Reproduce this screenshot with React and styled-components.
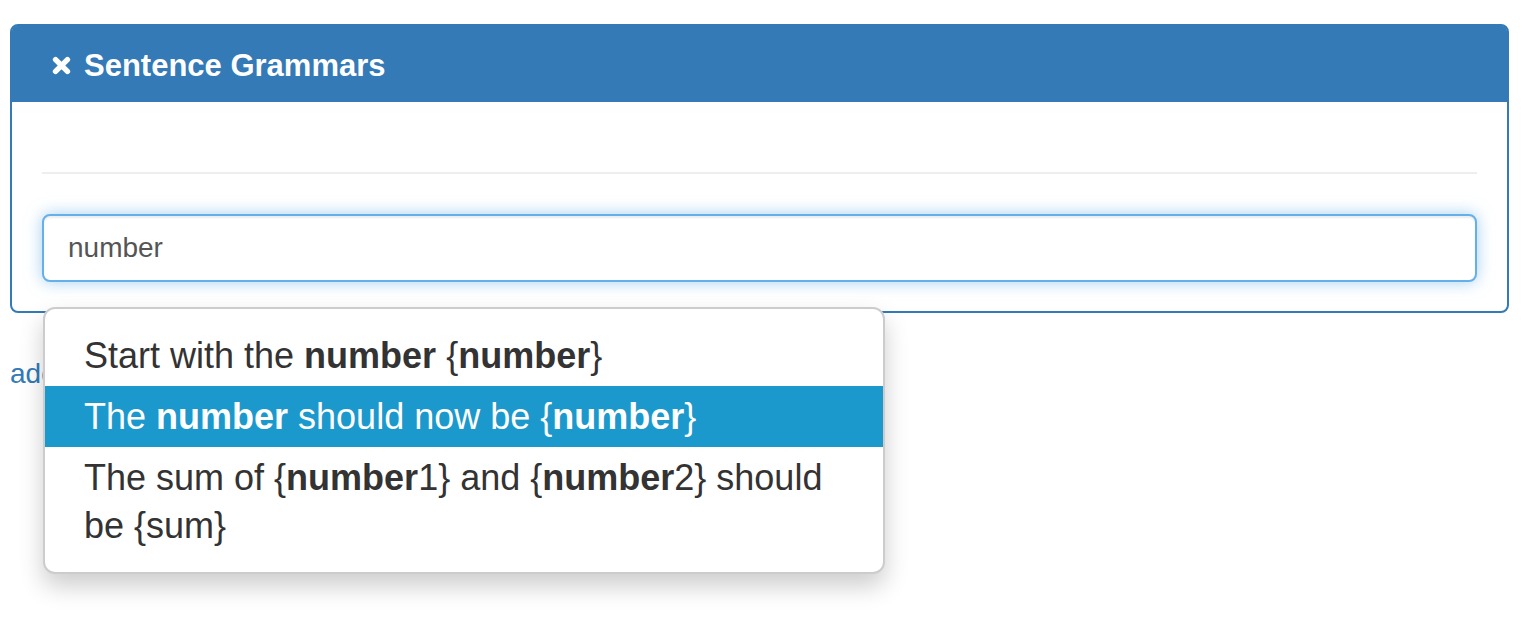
import React, { useState } from "react";
import styled, { createGlobalStyle } from "styled-components";

const GlobalStyle = createGlobalStyle`
  body {
    margin: 0;
    background: #fff;
    font-family: "Liberation Sans", Arial, sans-serif;
    color: #333;
  }
`;

const suggestions = [
  [["Start with the "], ["number", true], [" {"], ["number", true], ["}"]],
  [["The "], ["number", true], [" should now be {"], ["number", true], ["}"]],
  [
    ["The sum of {"],
    ["number", true],
    ["1} and {"],
    ["number", true],
    ["2} should be {sum}"],
  ],
];

export default function App() {
  const [query, setQuery] = useState("number");
  const [active, setActive] = useState(1);

  return (
    <Page>
      <GlobalStyle />
      <Panel>
        <Heading>
          <CloseIcon viewBox="0 0 16 16">
            <path
              d="M3 3 L13 13 M13 3 L3 13"
              stroke="#fff"
              strokeWidth="4.6"
              strokeLinecap="round"
            />
          </CloseIcon>
          Sentence Grammars
        </Heading>
        <Body>
          <Rule />
          <Field>
            <Input value={query} onChange={(e) => setQuery(e.target.value)} />
            <Dropdown>
              {suggestions.map((parts, i) => (
                <Item
                  key={i}
                  $active={i === active}
                  onMouseEnter={() => setActive(i)}
                >
                  {parts.map(([text, bold], j) =>
                    bold ? <b key={j}>{text}</b> : <span key={j}>{text}</span>
                  )}
                </Item>
              ))}
            </Dropdown>
          </Field>
        </Body>
      </Panel>
      <AddLink href="#">add sentence grammar</AddLink>
    </Page>
  );
}

const Page = styled.div`
  min-height: 100vh;
  box-sizing: border-box;
  padding: 24px 25px 0 10px;
`;

const Panel = styled.div`
  border: 2px solid #337ab7;
  border-radius: 8px;
  background: #fff;
  margin-bottom: 45px;
`;

const Heading = styled.div`
  display: flex;
  align-items: center;
  gap: 13px;
  height: 76px;
  padding: 3px 40px 0;
  box-sizing: border-box;
  background: #337ab7;
  color: #fff;
  font-size: 31px;
  font-weight: bold;
  border-radius: 5px 5px 0 0;
`;

const CloseIcon = styled.svg`
  width: 19px;
  height: 19px;
  flex-shrink: 0;
`;

const Body = styled.div`
  padding: 30px 30px 29px;
`;

const Rule = styled.hr`
  margin: 40px 0 40px;
  border: 0;
  border-top: 2px solid #eee;
`;

const Field = styled.div`
  position: relative;
`;

const Input = styled.input`
  display: block;
  box-sizing: border-box;
  width: 100%;
  height: 68px;
  padding: 0 24px;
  font-family: "Liberation Sans", Arial, sans-serif;
  font-size: 28px;
  color: #555;
  border: 2px solid #66afe9;
  border-radius: 8px;
  outline: none;
  box-shadow: inset 0 2px 2px rgba(0, 0, 0, 0.075),
    0 0 16px rgba(102, 175, 233, 0.6);
`;

const Dropdown = styled.div`
  position: absolute;
  top: 93px;
  left: 1px;
  z-index: 10;
  box-sizing: border-box;
  width: 842px;
  padding: 16px 0;
  background: #fff;
  border: 2px solid #ccc;
  border-radius: 12px;
  box-shadow: 0 12px 24px rgba(0, 0, 0, 0.2);
`;

const Item = styled.div`
  padding: 7px 40px 6px 39px;
  font-size: 36px;
  line-height: 48px;
  color: ${(p) => (p.$active ? "#fff" : "#333")};
  background: ${(p) => (p.$active ? "#1b99cd" : "transparent")};
  cursor: pointer;
`;

const AddLink = styled.a`
  font-size: 28px;
  color: #337ab7;
  text-decoration: none;
`;
